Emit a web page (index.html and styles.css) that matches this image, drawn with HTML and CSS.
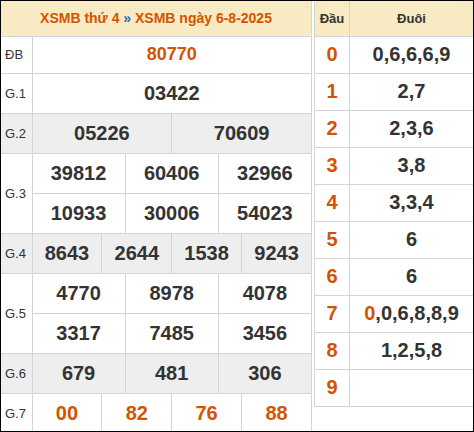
FILE: index.html
```html
<!DOCTYPE html>
<html lang="vi">
<head>
<meta charset="utf-8">
<title>XSMB</title>
<link rel="stylesheet" href="styles.css">
</head>
<body>
<div class="board">
  <table class="kq">
    <colgroup>
      <col class="c-label">
      <col><col><col><col><col><col><col><col><col><col><col><col>
    </colgroup>
    <tr class="head">
      <th colspan="13">XSMB thứ 4 <span class="sep">»</span> XSMB ngày 6-8-2025</th>
    </tr>
    <tr class="r37">
      <td class="lbl">ĐB</td>
      <td colspan="12" class="num db">80770</td>
    </tr>
    <tr>
      <td class="lbl">G.1</td>
      <td colspan="12" class="num">03422</td>
    </tr>
    <tr class="gray">
      <td class="lbl">G.2</td>
      <td colspan="6" class="num">05226</td>
      <td colspan="6" class="num">70609</td>
    </tr>
    <tr>
      <td class="lbl" rowspan="2">G.3</td>
      <td colspan="4" class="num">39812</td>
      <td colspan="4" class="num">60406</td>
      <td colspan="4" class="num">32966</td>
    </tr>
    <tr>
      <td colspan="4" class="num">10933</td>
      <td colspan="4" class="num">30006</td>
      <td colspan="4" class="num">54023</td>
    </tr>
    <tr class="gray">
      <td class="lbl">G.4</td>
      <td colspan="3" class="num">8643</td>
      <td colspan="3" class="num">2644</td>
      <td colspan="3" class="num">1538</td>
      <td colspan="3" class="num">9243</td>
    </tr>
    <tr>
      <td class="lbl" rowspan="2">G.5</td>
      <td colspan="4" class="num">4770</td>
      <td colspan="4" class="num">8978</td>
      <td colspan="4" class="num">4078</td>
    </tr>
    <tr>
      <td colspan="4" class="num">3317</td>
      <td colspan="4" class="num">7485</td>
      <td colspan="4" class="num">3456</td>
    </tr>
    <tr class="gray">
      <td class="lbl">G.6</td>
      <td colspan="4" class="num">679</td>
      <td colspan="4" class="num">481</td>
      <td colspan="4" class="num">306</td>
    </tr>
    <tr>
      <td class="lbl">G.7</td>
      <td colspan="3" class="num hot">00</td>
      <td colspan="3" class="num hot">82</td>
      <td colspan="3" class="num hot">76</td>
      <td colspan="3" class="num hot">88</td>
    </tr>
  </table>

  <table class="loto">
    <colgroup>
      <col class="c-dau">
      <col>
    </colgroup>
    <tr class="head">
      <th>Đầu</th>
      <th>Đuôi</th>
    </tr>
    <tr><td class="dau">0</td><td class="duoi">0,6,6,6,9</td></tr>
    <tr><td class="dau">1</td><td class="duoi">2,7</td></tr>
    <tr><td class="dau">2</td><td class="duoi">2,3,6</td></tr>
    <tr><td class="dau">3</td><td class="duoi">3,8</td></tr>
    <tr><td class="dau">4</td><td class="duoi">3,3,4</td></tr>
    <tr><td class="dau">5</td><td class="duoi">6</td></tr>
    <tr><td class="dau">6</td><td class="duoi">6</td></tr>
    <tr><td class="dau">7</td><td class="duoi"><span class="hot">0</span>,0,6,8,8,9</td></tr>
    <tr><td class="dau">8</td><td class="duoi">1,2,5,8</td></tr>
    <tr><td class="dau">9</td><td class="duoi"></td></tr>
  </table>
</div>
</body>
</html>
```

FILE: styles.css
```css
html, body {
  margin: 0;
  padding: 0;
  background: #fff;
}

body {
  font-family: "Liberation Sans", Arial, sans-serif;
  color: #333;
}

.board {
  display: flex;
  align-items: flex-start;
  gap: 2px;
  width: 474px;
  height: 432px;
  box-sizing: border-box;
  border: 1px solid #000;
  overflow: hidden;
}

table {
  border-collapse: collapse;
  table-layout: fixed;
  flex: none;
}

td, th {
  border: 1px solid #d4d4d4;
  padding: 0;
  text-align: center;
  vertical-align: middle;
}

.kq {
  width: 311px;
}

.kq .c-label {
  width: 31px;
}

.kq tr {
  height: 40px;
}

.kq tr.head,
.loto tr.head {
  height: 35px;
}

.kq tr.r37 {
  height: 37px;
}

.head th {
  background: #f8eac3;
  border-top: none;
  font-weight: bold;
  font-size: 14px;
  color: #d35400;
}

.kq td:first-child,
.kq th {
  border-left: none;
}

.lbl {
  text-align: left;
  padding-left: 4px;
  font-size: 13px;
  color: #333;
}

.gray td {
  background: #eeeeee;
}

.num {
  font-size: 20px;
  font-weight: bold;
  color: #333;
}

.num.db {
  font-size: 18px;
  color: #d35400;
}

.hot {
  color: #d35400;
}

.sep {
  color: #1f6fc0;
}

.loto {
  width: 159px;
}

.loto .c-dau {
  width: 35px;
}

.loto tr {
  height: 37px;
}

.loto th {
  font-size: 13px;
  color: #333;
}

.loto td:last-child,
.loto th:last-child {
  border-right: none;
}

.dau {
  font-size: 20px;
  font-weight: bold;
  color: #d35400;
}

.duoi {
  font-size: 20px;
  font-weight: bold;
  color: #333;
}
```
